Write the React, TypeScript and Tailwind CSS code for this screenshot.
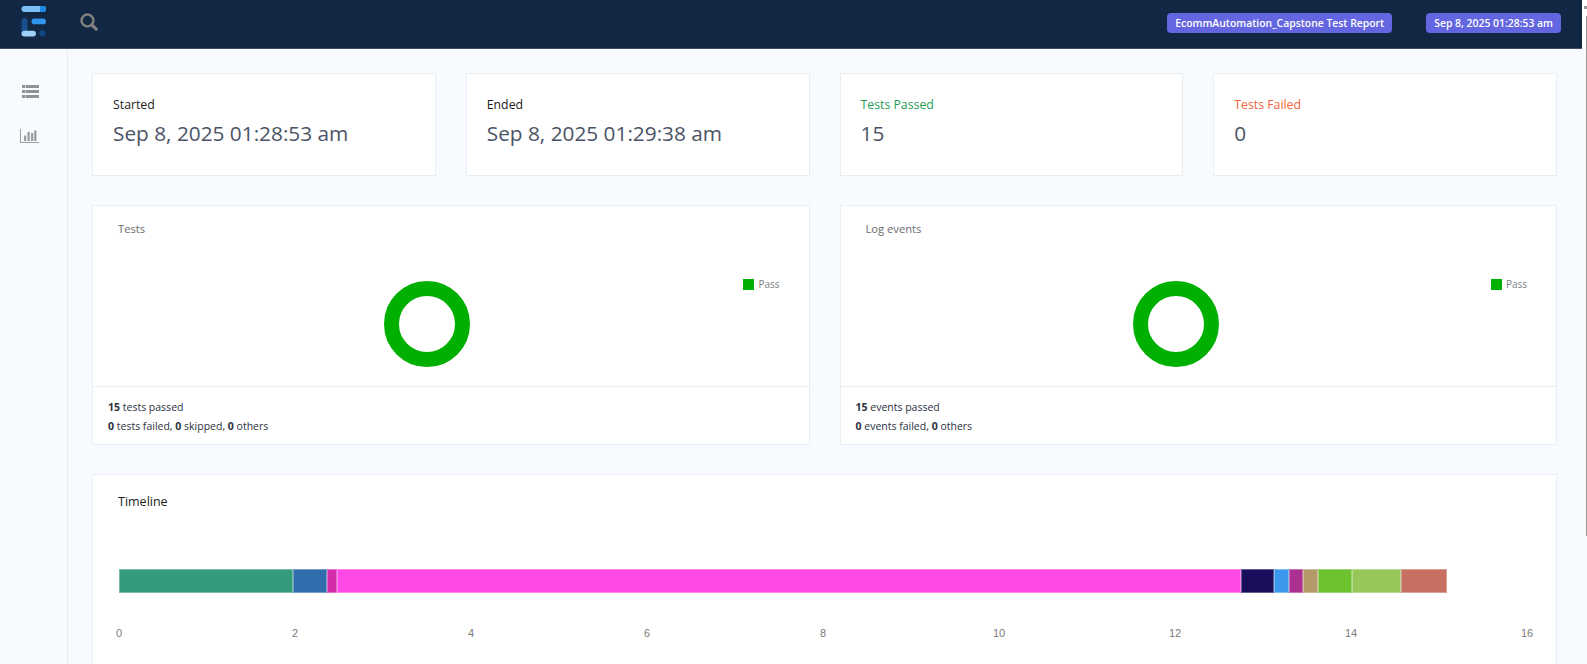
import React from "react";

const font = "font-['Open_Sans','Noto_Sans',sans-serif]";

function Logo() {
  return (
    <svg width="28" height="34" viewBox="0 0 28 34" className="block">
      <rect x="0.5" y="1" width="24.5" height="6" rx="3" fill="#7cc0f5" />
      <path d="M19 1h3a3 3 0 0 1 0 6h-3z" fill="#1e88e5" />
      <rect x="10.5" y="13.5" width="14.5" height="5.8" rx="2.9" fill="#2f95ee" />
      <rect x="0.5" y="13" width="6" height="18" rx="3" fill="#17508c" />
      <rect x="0.5" y="25.7" width="14.5" height="5.8" rx="2.9" fill="#9ed0f8" />
      <circle cx="21.3" cy="28.3" r="3" fill="#124a85" />
    </svg>
  );
}

function Search() {
  return (
    <svg width="18" height="18" viewBox="0 0 20 20" fill="none" stroke="#7f7f7d" strokeWidth="2.8" className="block">
      <circle cx="8.3" cy="8.3" r="6.6" />
      <path d="M13.2 13.2 18 18" strokeLinecap="round" strokeWidth="3.6" />
    </svg>
  );
}

function ListIcon() {
  return (
    <svg width="17" height="13" viewBox="0 0 17 13" fill="#8f9398" className="block">
      <rect x="0" y="0" width="3" height="3" />
      <rect x="3.6" y="0" width="13.4" height="3" />
      <rect x="0" y="5" width="3" height="3" />
      <rect x="3.6" y="5" width="13.4" height="3" />
      <rect x="0" y="10" width="3" height="3" />
      <rect x="3.6" y="10" width="13.4" height="3" />
    </svg>
  );
}

function BarsIcon() {
  return (
    <svg width="19" height="14" viewBox="0 0 19 14" fill="#9a9da1" className="mr-[2px] block">
      <rect x="0" y="0" width="1" height="14" />
      <rect x="0" y="13" width="19" height="1" />
      <rect x="4" y="6.5" width="2.3" height="5.5" />
      <rect x="7.5" y="3" width="2.3" height="9" />
      <rect x="11" y="4" width="2.3" height="8" />
      <rect x="14.2" y="1.5" width="2.3" height="10.5" />
    </svg>
  );
}

function Badge({ children }: { children: React.ReactNode }) {
  return (
    <span className="rounded-[4px] bg-[#6366e0] px-2 py-[3px] text-[10.4px] font-semibold leading-[14px] text-white">
      {children}
    </span>
  );
}

function Stat({ label, value, color }: { label: string; value: string; color: string }) {
  return (
    <div className="h-[103px] border border-[#e9eef3] bg-white pl-5 pt-[22px]">
      <p className={`text-[12.3px] leading-[18px] ${color}`}>{label}</p>
      <p className="mt-[5px] text-[20.8px] leading-[28px] text-[#4a5365]">{value}</p>
    </div>
  );
}

function Donut() {
  return (
    <svg width="86" height="86" viewBox="0 0 86 86" className="block">
      <circle cx="43" cy="43" r="35.5" fill="none" stroke="#00b000" strokeWidth="15" />
    </svg>
  );
}

function ChartCard({ title, lines, shift }: { title: string; lines: React.ReactNode[]; shift: string }) {
  return (
    <div className="border border-[#e9eef3] bg-white">
      <div className="h-[180px] pl-[25px] pr-[29px] pt-[15px]">
        <p className="text-[11.2px] leading-[16px] text-[#6b6b6b]">{title}</p>
        <div className="flex">
          <div className={`flex flex-1 justify-center ${shift}`}>
            <div className="mt-[44px]">
              <Donut />
            </div>
          </div>
          <div className="mt-[40px] flex h-[14px] items-center gap-[4px] self-start">
            <span className="h-[11px] w-[11px] bg-[#00b000]" />
            <span className="text-[10px] text-[#808080]">Pass</span>
          </div>
        </div>
      </div>
      <div className="h-[58px] border-t border-[#e9eef3] px-[15px] pt-[11px] text-[10.5px] leading-[19px] text-[#2b3240]">
        {lines.map((l, i) => (
          <p key={i}>{l}</p>
        ))}
      </div>
    </div>
  );
}

const segments: [number, string][] = [
  [174.3, "#359b7d"],
  [33.4, "#2f6dac"],
  [10, "#d42caa"],
  [904.3, "#ff48e4"],
  [33.3, "#180e5c"],
  [14.7, "#3b99ed"],
  [14.3, "#ab3191"],
  [14.4, "#b49a68"],
  [34, "#6dc12f"],
  [49.6, "#96c758"],
  [45.4, "#c77062"],
];

export default function App() {
  const ticks = [0, 2, 4, 6, 8, 10, 12, 14, 16];
  return (
    <div className={`relative flex h-[664px] flex-col overflow-hidden bg-[#f7fafe] ${font}`}>
      <span className="absolute right-0 top-[6px] h-[3px] w-[3px] bg-[#9a9a9a]" />
      <span className="absolute right-0 top-[16px] h-[520px] w-px bg-[#9a9a9a]" />
      <div className="shrink-0 bg-white pr-[5px]">
        <header className="flex h-[49px] items-center border-b border-[#3d4e66] bg-[#122744] pr-[21px]">
          <div className="ml-[21px] self-start pt-[5px]">
            <Logo />
          </div>
          <div className="ml-[31px] self-start pt-[13px]">
            <Search />
          </div>
          <div className="ml-auto flex items-center gap-[34px] pb-[2px]">
            <Badge>EcommAutomation_Capstone Test Report</Badge>
            <Badge>Sep 8, 2025 01:28:53 am</Badge>
          </div>
        </header>
      </div>
      <div className="flex min-h-0 flex-1">
        <aside className="flex w-[68px] shrink-0 flex-col items-center gap-[31px] border-r border-[#e9eef3] pr-[7px] pt-[36px]">
          <ListIcon />
          <BarsIcon />
        </aside>
        <main className="min-w-0 flex-1 pl-6 pr-[30px] pt-6">
          <div className="grid grid-cols-4 gap-[30px]">
            <Stat label="Started" value="Sep 8, 2025 01:28:53 am" color="text-[#1c1c1c]" />
            <Stat label="Ended" value="Sep 8, 2025 01:29:38 am" color="text-[#1c1c1c]" />
            <Stat label="Tests Passed" value="15" color="text-[#1f9d55]" />
            <Stat label="Tests Failed" value="0" color="text-[#f4633a]" />
          </div>
          <div className="mt-[29px] grid grid-cols-2 gap-[30px]">
            <ChartCard
              title="Tests"
              shift="-ml-[8px]"
              lines={[
                <><b>15</b> tests passed</>,
                <><b>0</b> tests failed, <b>0</b> skipped, <b>0</b> others</>,
              ]}
            />
            <ChartCard
              title="Log events"
              shift="-ml-[4px]"
              lines={[
                <><b>15</b> events passed</>,
                <><b>0</b> events failed, <b>0</b> others</>,
              ]}
            />
          </div>
          <div className="mt-[29px] h-[220px] border border-[#e9eef3] bg-white pl-[25px] pt-[18px]">
            <p className="text-[12.5px] leading-[18px] text-[#1c1c1c]">Timeline</p>
            <div className="ml-px mt-[58px] flex h-[24px] w-[1328px]">
              {segments.map(([w, c], i) => (
                <div key={i} className="border border-[#ffffff55]" style={{ width: w, backgroundColor: c }} />
              ))}
            </div>
            <div className="ml-px mt-[33px] flex w-[1408px] justify-between font-['Liberation_Sans',sans-serif] text-[11px] leading-[14px] text-[#7a7a7a]">
              {ticks.map((t) => (
                <span key={t} className="flex w-0 justify-center">{t}</span>
              ))}
            </div>
          </div>
        </main>
      </div>
    </div>
  );
}
